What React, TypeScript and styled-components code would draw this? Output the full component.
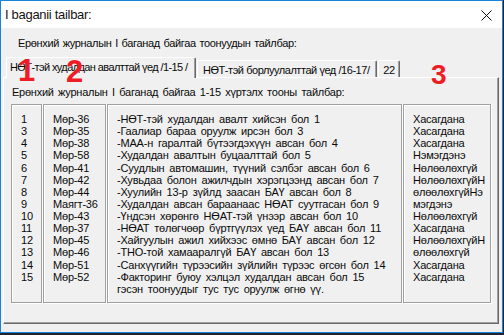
import React from "react";
import styled, { createGlobalStyle } from "styled-components";

const GlobalStyle = createGlobalStyle`
  html, body { margin: 0; padding: 0; background: #1f2630; }
  #root { width: 504px; height: 335px; overflow: hidden; }
`;

const UI_FONT = `"Liberation Sans", Arial, sans-serif`;

const Window = styled.div`
  position: relative;
  box-sizing: border-box;
  width: 503px;
  height: 333px;
  border: 1px solid #1883d7;
  background: #f0f0f0;
  display: flex;
  flex-direction: column;
  font-family: ${UI_FONT};
  font-size: 11px;
  letter-spacing: -0.35px;
  color: #000;
`;

const TitleBar = styled.div`
  height: 27px;
  background: #fff;
  display: flex;
  align-items: center;
  justify-content: space-between;
  padding: 0 10px 0 4px;
`;

const Title = styled.span`
  font-size: 13px;
  letter-spacing: -0.3px;
  color: #141414;
`;

const Close = styled.svg`
  width: 11px;
  height: 11px;
  margin-top: 1px;
`;

const Caption = styled.div`
  margin: 9px 0 0 17px;
  line-height: 13px;
  height: 13px;
  color: #0a0a0a;
  word-spacing: 1px;
`;

const Tabs = styled.div`
  margin: 7px 0 0 2px;
  display: flex;
  flex-direction: column;
`;

const TabRow = styled.div`
  position: relative;
  z-index: 1;
  height: 20px;
  display: flex;
  align-items: flex-end;
  padding-left: 3px;
`;

const Tab = styled.div<{ $active?: boolean; $w: number; $center?: boolean }>`
  box-sizing: border-box;
  width: ${(p) => p.$w}px;
  height: ${(p) => (p.$active ? 21 : 17)}px;
  margin-bottom: ${(p) => (p.$active ? -1 : 0)}px;
  margin-left: ${(p) => (p.$active ? 0 : 1)}px;
  background: #f0f0f0;
  border-top: 1px solid #fff;
  border-left: 1px solid #fff;
  border-right: 1px solid #696969;
  box-shadow: inset -1px 0 0 #a0a0a0;
  border-radius: 2px 2px 0 0;
  display: flex;
  align-items: flex-start;
  justify-content: ${(p) => (p.$center ? "center" : "flex-start")};
  padding: ${(p) => (p.$active ? "3px 0 0 3px" : p.$center ? "3px 0 0 0" : "3px 0 0 5px")};
  line-height: 13px;
  white-space: nowrap;
  overflow: hidden;
  letter-spacing: ${(p) => (p.$active ? -0.6 : -0.45)}px;
  word-spacing: 0;
  color: #0a0a0a;
`;

const Panel = styled.div`
  box-sizing: border-box;
  width: 496px;
  height: 247px;
  border-top: 1px solid #fff;
  border-left: 1px solid #fff;
  border-right: 1px solid #696969;
  border-bottom: 1px solid #696969;
  box-shadow: inset -1px -1px 0 #a0a0a0;
  display: flex;
  flex-direction: column;
`;

const PanelLabel = styled.div`
  margin: 8px 0 0 8px;
  line-height: 13px;
  height: 13px;
  color: #0a0a0a;
  letter-spacing: -0.25px;
  word-spacing: 1.6px;
`;

const Grid = styled.div`
  margin: 5px 0 0 7px;
  display: flex;
  gap: 1px;
  height: 199px;
`;

const Cell = styled.div<{ $w: number }>`
  box-sizing: border-box;
  width: ${(p) => p.$w}px;
  height: 100%;
  border: 1px solid #a0a0a0;
  box-shadow: 1px 1px 0 #fff, inset 1px 1px 0 #fff;
  padding: 8px 0 0 9px;
  display: flex;
  flex-direction: column;
  overflow: hidden;
`;

const Line = styled.div`
  height: 12.14px;
  line-height: 12.14px;
  white-space: nowrap;
  color: #0a0a0a;
  letter-spacing: -0.2px;
  word-spacing: 2px;
`;

const Marker = styled.span<{ $x: number; $y: number; $size: number }>`
  position: absolute;
  left: ${(p) => p.$x}px;
  top: ${(p) => p.$y}px;
  font-family: ${UI_FONT};
  font-weight: bold;
  font-size: ${(p) => p.$size}px;
  line-height: 1;
  letter-spacing: 0;
  color: #ee1d25;
  z-index: 5;
`;

const nums = ["1", "3", "4", "5", "6", "7", "8", "9", "10", "11", "12", "13", "14", "15"];
const rowsRef = [
  "Мөр-36", "Мөр-35", "Мөр-38", "Мөр-58", "Мөр-41", "Мөр-42", "Мөр-44",
  "Маягт-36", "Мөр-43", "Мөр-37", "Мөр-45", "Мөр-46", "Мөр-51", "Мөр-52",
];
const desc = [
  "-НӨТ-тэй худалдан авалт хийсэн бол 1",
  "-Гаалиар бараа оруулж ирсэн бол 3",
  "-МАА-н гаралтай бүтээгдэхүүн авсан бол 4",
  "-Худалдан авалтын буцаалттай бол 5",
  "-Суудлын автомашин, түүний сэлбэг авсан бол 6",
  "-Хувьдаа болон ажилчдын хэрэгцээнд авсан бол 7",
  "-Хуулийн 13-р зүйлд заасан БАҮ авсан бол 8",
  "-Худалдан авсан бараанаас НӨАТ суутгасан бол 9",
  "-Үндсэн хөрөнгө НӨАТ-тэй үнээр авсан бол 10",
  "-НӨАТ төлөгчөөр бүртгүүлэх үед БАҮ авсан бол 11",
  "-Хайгуулын ажил хийхээс өмнө БАҮ авсан бол 12",
  "-ТНО-той хамааралгүй БАҮ авсан бол 13",
  "-Санхүүгийн түрээсийн зүйлийн түрээс өгсөн бол 14",
  "-Факторинг буюу хэлцэл худалдан авсан бол 15",
  "гэсэн тоонуудыг тус тус оруулж өгнө үү.",
];
const effect = [
  "Хасагдана", "Хасагдана", "Хасагдана", "Нэмэгдэнэ", "Нөлөөлөхгүй",
  "НөлөөлөхгүйН", "өлөөлөхгүйНэ", "мэгдэнэ", "Нөлөөлөхгүй", "Хасагдана",
  "НөлөөлөхгүйН", "өлөөлөхгүй", "Хасагдана", "Хасагдана",
];

export default function App() {
  return (
    <>
      <GlobalStyle />
      <Window>
        <TitleBar>
          <Title>I baganii tailbar:</Title>
          <Close viewBox="0 0 11 11">
            <path d="M0.5 0.5 L10.5 10.5 M10.5 0.5 L0.5 10.5" stroke="#111" strokeWidth="1" fill="none" />
          </Close>
        </TitleBar>
        <Caption>Ерөнхий журналын I баганад байгаа тоонуудын тайлбар:</Caption>
        <Tabs>
          <TabRow>
            <Tab $active $w={190}>НӨТ-тэй худалдан авалттай үед /1-15 /</Tab>
            <Tab $w={180}>НӨТ-тэй борлуулалттай үед /16-17/</Tab>
            <Tab $w={22} $center>22</Tab>
          </TabRow>
          <Panel>
            <PanelLabel>Ерөнхий журналын I баганад байгаа 1-15 хүртэлх тооны тайлбар:</PanelLabel>
            <Grid>
              <Cell $w={31}>{nums.map((n) => <Line key={n}>{n}</Line>)}</Cell>
              <Cell $w={63}>{rowsRef.map((r, i) => <Line key={i}>{r}</Line>)}</Cell>
              <Cell $w={295}>{desc.map((d, i) => <Line key={i}>{d}</Line>)}</Cell>
              <Cell $w={88}>{effect.map((e, i) => <Line key={i}>{e}</Line>)}</Cell>
            </Grid>
          </Panel>
        </Tabs>
        <Marker $x={17} $y={54} $size={31}>1</Marker>
        <Marker $x={65} $y={55} $size={31}>2</Marker>
        <Marker $x={430} $y={60} $size={28}>3</Marker>
      </Window>
    </>
  );
}
